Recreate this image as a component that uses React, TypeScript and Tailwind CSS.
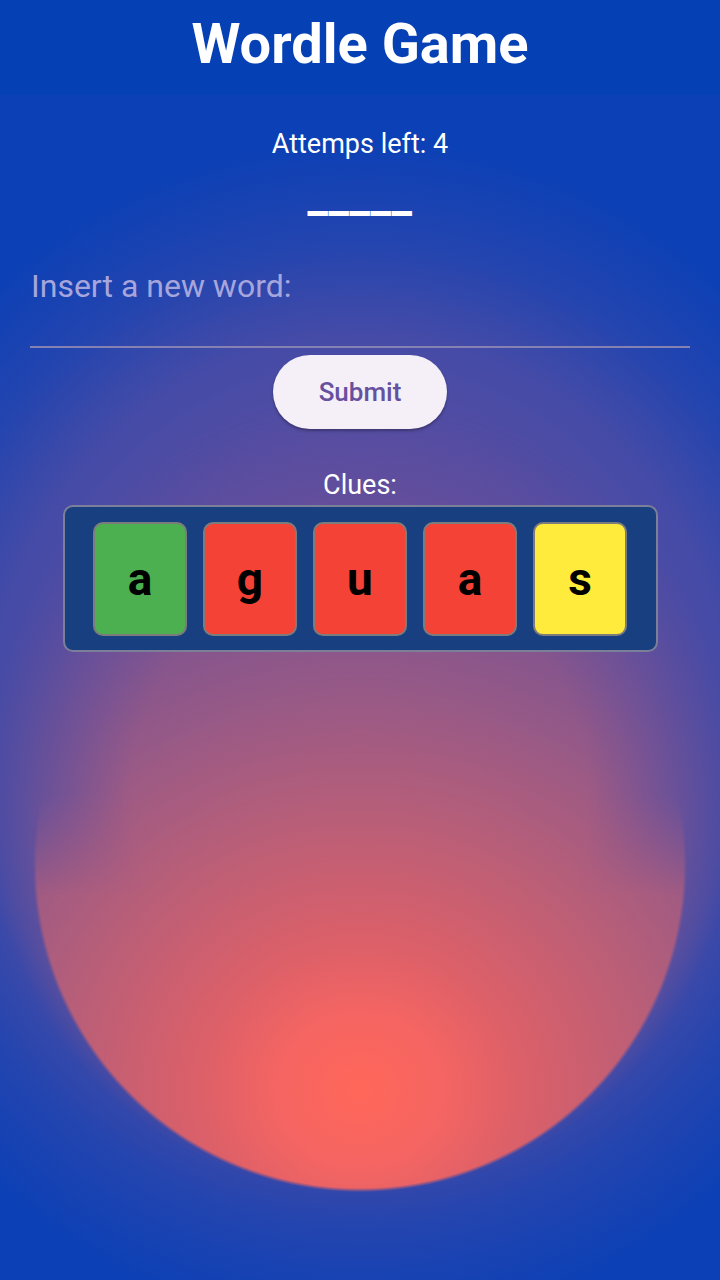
import { useState } from "react";

type Clue = { letter: string; state: "hit" | "miss" | "near" };

const clues: Clue[] = [
  { letter: "a", state: "hit" },
  { letter: "g", state: "miss" },
  { letter: "u", state: "miss" },
  { letter: "a", state: "miss" },
  { letter: "s", state: "near" },
];

const tileColor: Record<Clue["state"], string> = {
  hit: "bg-[#4caf50]",
  miss: "bg-[#f44336]",
  near: "bg-[#ffeb3b]",
};

export default function App() {
  const [word, setWord] = useState("");

  return (
    <div className="min-h-[1280px] w-full bg-[#0b40b6] font-['Roboto','Noto_Sans',sans-serif]">
      <header className="flex h-[95px] items-center justify-center bg-[#0540b5] pb-[8px]">
        <h1 className="text-[56px] font-bold leading-none text-white">Wordle Game</h1>
      </header>

      <main className="relative h-[1185px] overflow-hidden">
        {/* purple haze */}
        <div className="pointer-events-none absolute inset-0 bg-[radial-gradient(ellipse_580px_620px_at_360px_640px,rgba(150,88,135,0.85)_0%,rgba(115,82,155,0.75)_45%,rgba(95,80,160,0.68)_65%,rgba(70,75,165,0.4)_80%,rgba(11,64,182,0)_97%)]" />
        {/* coral glow: soft on top, crisp disc edge at the bottom */}
        <div className="pointer-events-none absolute inset-0 bg-[radial-gradient(ellipse_870px_800px_at_360px_995px,#ff6759_0%,#f66562_9%,#dd6068_18%,#b45e7a_36%,rgba(154,90,133,0.95)_49%,rgba(133,85,140,0.8)_62%,rgba(106,79,150,0.5)_74%,rgba(80,75,165,0)_100%)] [mask-image:radial-gradient(ellipse_380px_400px_at_360px_700px,black_60%,transparent_100%),radial-gradient(circle_327px_at_360px_770px,black_323px,transparent_327px),linear-gradient(to_bottom,transparent_700px,black_800px)] [mask-composite:add,intersect,add]" />

        <div className="relative flex flex-col items-center">
          <p className="mt-[36px] text-[27px] leading-none text-white">Attemps left: 4</p>
          <p className="mt-[14px] text-[46px] font-bold leading-none tracking-[0.5px] text-white">_____</p>

          <label className="mt-[38px] block w-full px-[30px]">
            <input
              value={word}
              onChange={(e) => setWord(e.target.value)}
              placeholder="Insert a new word:"
              className="box-border h-[92px] w-full border-b-2 border-[#8681b3] bg-transparent px-px pb-[30px] text-[32px] text-white outline-none placeholder:text-[#a7a6dc]"
            />
          </label>

          <button
            type="button"
            className="mt-[7px] h-[74px] w-[174px] rounded-full bg-[#f5eff8] text-[26px] font-medium text-[#65519f] shadow-[0_2px_3px_rgba(0,0,0,0.3)]"
          >
            Submit
          </button>

          <p className="mt-[43px] text-[27px] leading-none text-white">Clues:</p>

          <div className="mt-[6px] flex h-[147px] w-[595px] items-center justify-center gap-[16px] rounded-[10px] border-2 border-[#7b7f99] bg-[#183f7f]">
            {clues.map((c, i) => (
              <div
                key={i}
                className={`flex h-[114px] w-[94px] items-center justify-center rounded-[10px] border-2 border-[#7c7c7c] ${tileColor[c.state]}`}
              >
                <span className="text-[46px] font-bold leading-none text-black">{c.letter}</span>
              </div>
            ))}
          </div>
        </div>
      </main>
    </div>
  );
}
